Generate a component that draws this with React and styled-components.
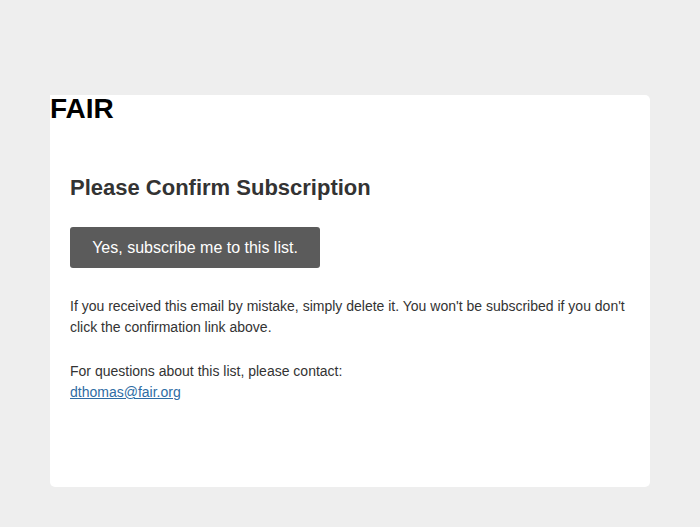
import React from 'react'
import styled, { createGlobalStyle } from 'styled-components';

const Global = createGlobalStyle`
  html, body {
    margin: 0;
    padding: 0;
    background: #eeeeee;
    font-family: "Liberation Sans", Arial, sans-serif;
  }
`;

const Page = styled.div({
  minHeight: "527px",
  paddingTop: "95px",
  boxSizing: "border-box",
  display: "flex",
  justifyContent: "center",
  alignItems: "flex-start"
});

const Card = styled.div({
  width: "600px",
  minHeight: "392px",
  background: "#ffffff",
  borderRadius: "0 5px 5px 5px",
  boxSizing: "border-box",
  paddingBottom: "40px"
});

const Logo = styled.div({
  fontSize: "28px",
  fontWeight: 700,
  color: "#000",
  lineHeight: "28px",
  margin: 0
});

const Body = styled.div({
  padding: "53px 20px 0 20px"
});

const Title = styled.h2({
  fontSize: "22px",
  fontWeight: 700,
  color: "#333333",
  lineHeight: "24px",
  margin: "0 0 27px 0"
});

const Button = styled.a({
  display: "inline-block",
  width: "250px",
  height: "41px",
  lineHeight: "41px",
  background: "#5b5b5b",
  color: "#ffffff",
  fontSize: "16px",
  textAlign: "center",
  borderRadius: "3px",
  textDecoration: "none",
  cursor: "pointer"
});

const Text = styled.p`
  font-size: 14px;
  line-height: 21px;
  color: #333333;
  margin: ${p => p.$first ? "28px" : "0"} 0 23px 0;
`;

const Mail = styled.a({
  color: "#2e6ca4",
  textDecoration: "underline"
});

const App = () => {
  return (
    <Page>
      <Global />
      <Card>
        <Logo>FAIR</Logo>
        <Body>
          <Title>Please Confirm Subscription</Title>
          <Button>Yes, subscribe me to this list.</Button>
          <Text $first>
            If you received this email by mistake, simply delete it. You won't be subscribed if you don't click the confirmation link above.
          </Text>
          <Text>
            For questions about this list, please contact:
            <br />
            <Mail href="#">dthomas@fair.org</Mail>
          </Text>
        </Body>
      </Card>
    </Page>
  )
}

export default App
